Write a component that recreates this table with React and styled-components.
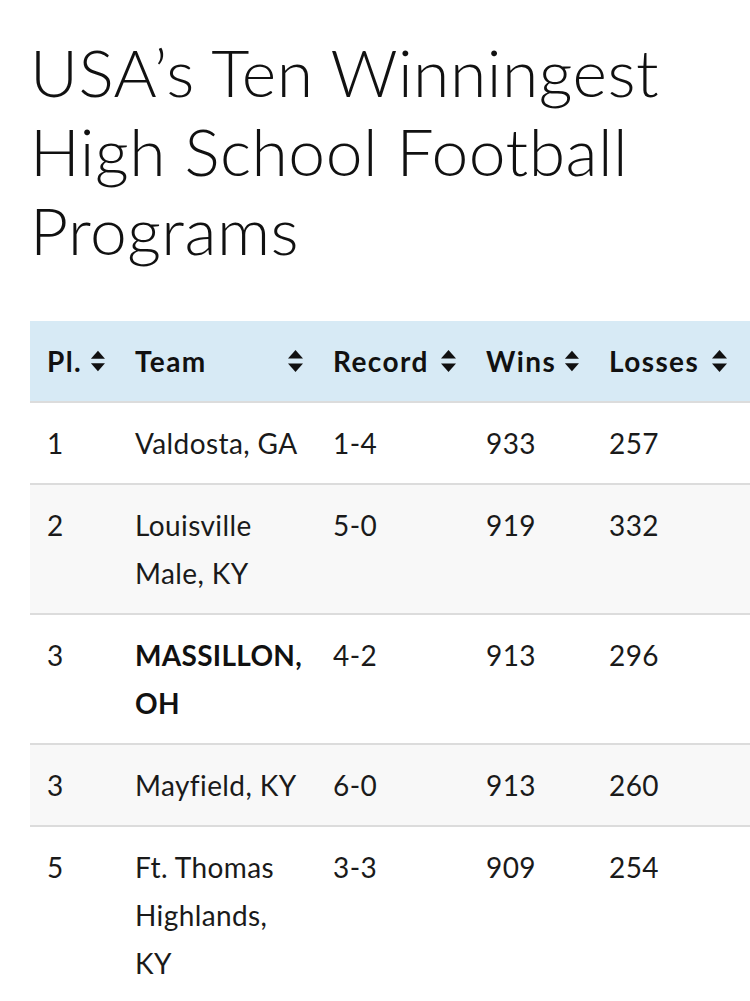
import React from 'react';
import styled, {createGlobalStyle} from 'styled-components';

const GlobalStyle = createGlobalStyle`
  html, body {
    margin: 0;
    padding: 0;
    background: #fff;
    overflow: hidden;
  }
  body {
    font-family: Lato, "Open Sans", sans-serif;
    color: #1a1a1a;
  }
`;

const rows = [
  {pl: '1', team: 'Valdosta, GA', record: '1-4', wins: '933', losses: '257'},
  {pl: '2', team: 'Louisville Male, KY', record: '5-0', wins: '919', losses: '332'},
  {pl: '3', team: 'MASSILLON, OH', record: '4-2', wins: '913', losses: '296', strong: true},
  {pl: '3', team: 'Mayfield, KY', record: '6-0', wins: '913', losses: '260'},
  {pl: '5', team: 'Ft. Thomas Highlands, KY', record: '3-3', wins: '909', losses: '254'},
];

const columns = [
  {key: 'pl', label: 'Pl.', width: 88},
  {key: 'team', label: 'Team', width: 198},
  {key: 'record', label: 'Record', width: 153},
  {key: 'wins', label: 'Wins', width: 123},
  {key: 'losses', label: 'Losses', width: 160},
];

const SortIcon = () => (
  <svg width="17" height="24" viewBox="0 0 17 24">
    <path d="M8.5 1 L16 9.5 H1 Z" fill="#111"/>
    <path d="M8.5 23 L16 14.5 H1 Z" fill="#111"/>
  </svg>
);

export default function App() {
  return <Page>
    <GlobalStyle/>
    <Title>USA’s Ten Winningest High School Football Programs</Title>
    <Table>
      <colgroup>
        {columns.map(c => <col key={c.key} style={{width: c.width}}/>)}
      </colgroup>
      <thead>
        <tr>
          {columns.map(c => <HeadCell key={c.key}>
            <HeadInner>
              <span>{c.label}</span>
              <SortIcon/>
            </HeadInner>
          </HeadCell>)}
        </tr>
      </thead>
      <tbody>
        {rows.map((r, i) => <Row key={i} striped={i % 2 === 1}>
          <Cell>{r.pl}</Cell>
          <Cell>{r.strong ? <b>{r.team}</b> : r.team}</Cell>
          <Cell>{r.record}</Cell>
          <Cell>{r.wins}</Cell>
          <Cell>{r.losses}</Cell>
        </Row>)}
      </tbody>
    </Table>
  </Page>
}

const Page = styled.div`
  width: 750px;
  height: 1001px;
  overflow: hidden;
  padding-left: 30px;
  box-sizing: border-box;
`;

const Title = styled.h1`
  margin: 32px 0 52px 0;
  width: 690px;
  font-family: Lato, sans-serif;
  font-weight: 300;
  font-size: 66px;
  line-height: 79px;
  letter-spacing: 0.5px;
  color: #111;
`;

const Table = styled.table`
  border-collapse: collapse;
  table-layout: fixed;
  width: 722px;
  font-size: 28px;
`;

const HeadCell = styled.th`
  background: #d7eaf5;
  border-bottom: 2px solid #dcdcdc;
  padding: 17px 12px 17px 17px;
  height: 80px;
  box-sizing: border-box;
  text-align: left;
  font-weight: 700;
  color: #111;
  letter-spacing: 1.4px;
  &:last-child { padding-right: 24px; }
`;

const HeadInner = styled.div`
  display: flex;
  align-items: center;
  justify-content: space-between;
  line-height: 46px;
  gap: 8px;
`;

const Row = styled.tr`
  background: ${p => p.striped ? '#f8f8f8' : '#fff'};
  border-bottom: 2px solid #dcdcdc;
`;

const Cell = styled.td`
  padding: 16px 12px 16px 17px;
  vertical-align: top;
  line-height: 48px;
  letter-spacing: 0.4px;
  color: #1a1a1a;
  b { font-weight: 700; color: #111; letter-spacing: 0.3px; }
`;
